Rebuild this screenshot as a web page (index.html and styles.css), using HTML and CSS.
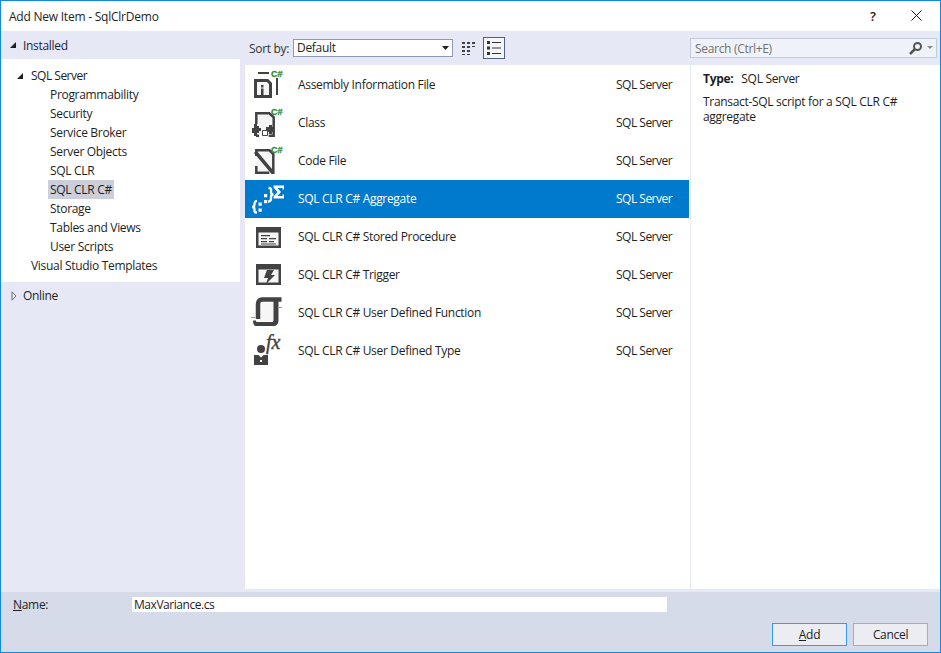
FILE: index.html
```html
<!DOCTYPE html>
<html lang="en">
<head>
<meta charset="utf-8">
<title>Add New Item - SqlClrDemo</title>
<link rel="stylesheet" href="styles.css">
</head>
<body>
<div class="window">
  <header class="titlebar">
    <div class="title">Add New Item - SqlClrDemo</div>
    <div class="help">?</div>
    <svg class="close" width="11" height="11" viewBox="0 0 11 11"><path d="M.5.5l10 10M10.500.5l-10 10" stroke="#1a1a1a" fill="none"/></svg>
  </header>
  <div class="main">
    <aside class="side">
      <div class="side-head"><svg class="arrow" width="8" height="8" viewBox="0 0 8 8"><path d="M7 1v6H1z" fill="#1e1e1e"/></svg><span>Installed</span></div>
      <div class="tree">
        <div class="node lvl1"><svg class="arrow" width="8" height="8" viewBox="0 0 8 8"><path d="M7 1v6H1z" fill="#1e1e1e"/></svg><span class="tight">SQL Server</span></div>
        <div class="node lvl2"><span>Programmability</span></div>
        <div class="node lvl2"><span>Security</span></div>
        <div class="node lvl2"><span>Service Broker</span></div>
        <div class="node lvl2"><span>Server Objects</span></div>
        <div class="node lvl2"><span>SQL CLR</span></div>
        <div class="node lvl2"><span class="current">SQL CLR C#</span></div>
        <div class="node lvl2"><span>Storage</span></div>
        <div class="node lvl2"><span>Tables and Views</span></div>
        <div class="node lvl2"><span>User Scripts</span></div>
        <div class="node lvl1b"><span>Visual Studio Templates</span></div>
      </div>
      <div class="side-online"><svg class="arrow-r" width="6" height="10" viewBox="0 0 6 10"><path d="M1 .8L5 5 1 9.2z" fill="#e6e9f5" stroke="#707070"/></svg><span>Online</span></div>
    </aside>
    <section class="center">
      <div class="toolbar">
        <span class="sort-label">Sort by:</span>
        <div class="select"><span>Default</span><svg width="7" height="4" viewBox="0 0 7 4"><path d="M0 0h7L3.500 4z" fill="#1e1e1e"/></svg></div>
        <svg class="view-grid" width="16" height="16" viewBox="0 0 16 16"><path d="M1 2h3v2H1zM6 2h3v2H6zM11 2h3v2h-3zM1 6h3v2H1zM6 6h3v2H6zM11 6h3v1h-3zM1 10h3v2H1zM6 10h3v2H6zM1 14h3v1H1zM6 14h3v1H6z" fill="#424242"/></svg>
        <div class="view-list"><svg width="16" height="16" viewBox="0 0 16 16"><path d="M1 1h3v3H1zM1 6.500h3v3H1zM1 12h3v3H1zM6 2h9v1H6zM6 7.500h9v1H6zM6 13h9v1H6z" fill="#333"/></svg></div>
      </div>
      <div class="list">
        <div class="row">
          <svg class="ico" width="32" height="32" viewBox="0 0 32 32"><path d="M4.500 11.500h12l3 3v13h-15z" fill="#f6f6f6" stroke="#424242" stroke-width="3"/><path d="M7 3h11v2H7zM25 9h2v17h-2z" fill="#424242"/><path d="M10 16h2.500v2.500H10zM10 19.500h2.500V26H10z" fill="#424242"/><text class="cs" x="20" y="8">C#</text></svg>
          <span class="name">Assembly Information File</span><span class="cat">SQL Server</span>
        </div>
        <div class="row">
          <svg class="ico" width="32" height="32" viewBox="0 0 32 32"><path d="M5 26V7h14l4 3v18H5z" fill="#f6f6f6"/><path d="M5.300 17V6.300h13l4.400 4v18.400h-5M8 28.700H5" fill="none" stroke="#424242" stroke-width="2.500"/><path d="M3 17h3v2h2v2h2v3H8v2H6v3H3v-3H1v-5h2zM15 20h3v-2h3v2h2v5h-2v2h-3v-2h-3z" fill="#424242"/><path d="M11.500 23.500h5v5h-5z" fill="#fff" stroke="#424242"/><text class="cs" x="20" y="8">C#</text></svg>
          <span class="name">Class</span><span class="cat">SQL Server</span>
        </div>
        <div class="row">
          <svg class="ico" width="32" height="32" viewBox="0 0 32 32"><path d="M4.500 6h14l4.500 4v19H4.500z" fill="#f6f6f6"/><path d="M5.300 21v6.700h13M5.300 11V5.300H18.500l3.800 3.700v20" fill="none" stroke="#424242" stroke-width="2.500"/><path d="M3 8l2.500-2.500 18 21.500-2.500 2.500z" fill="#424242"/><text class="cs" x="20" y="8">C#</text></svg>
          <span class="name">Code File</span><span class="cat">SQL Server</span>
        </div>
        <div class="row selected">
          <svg class="ico" width="32" height="32" viewBox="0 0 32 32"><path d="M6 29.500H5c-2 0-1.500-2-1.500-3.500S3 24 1 24c2 0 2.500-.5 2.500-2.500S3.500 18 6 18" fill="none" stroke="#fff" stroke-width="2.300"/><path d="M7.500 19.500h3.200v3.200H7.500zM7.500 25.500h3.200v3.200H7.500zM13 11h3.200v3.200H13zM13 17h3.200v3.200H13z" fill="#fff"/><path d="M17.500 5c3.500 0 2.500 2 2.500 4s1 2.500 2.500 2.500C21 11.500 20 12 20 14s.5 4.500-3 4.500" fill="none" stroke="#fff" stroke-width="2.300"/><path d="M22.500 2.500H33V6.500h-1.500V5H26.500l3.500 4-3.500 4h5v-1.500H33V15.500H22.500v-2L26.500 9l-4-4.500z" fill="#fff"/></svg>
          <span class="name">SQL CLR C# Aggregate</span><span class="cat">SQL Server</span>
        </div>
        <div class="row">
          <svg class="ico" width="32" height="32" viewBox="0 0 32 32"><path d="M5 6h25v21H5z" fill="#424242"/><path d="M7.500 11.500h20V24.500h-20z" fill="#f6f6f6"/><path d="M10 14h9v1.300h-9zM10 17h6v1.300h-6zM10 20h6v1.300h-6zM10 22.500h15v1h-15zM18 17h7v1.300h-7zM18 20h5v1.300h-5z" fill="#424242"/></svg>
          <span class="name">SQL CLR C# Stored Procedure</span><span class="cat">SQL Server</span>
        </div>
        <div class="row">
          <svg class="ico" width="32" height="32" viewBox="0 0 32 32"><path d="M5 5h25v21H5z" fill="#424242"/><path d="M7.500 10.500h20v13h-20z" fill="#f6f6f6"/><path d="M16 11h7l-3 5h4l-9 9 2-6h-4z" fill="#424242"/></svg>
          <span class="name">SQL CLR C# Trigger</span><span class="cat">SQL Server</span>
        </div>
        <div class="row">
          <svg class="ico" width="32" height="32" viewBox="0 0 32 32"><path d="M9 6h15v18H9z" fill="#f6f6f6"/><path d="M7 22V7c0-3 2-4.500 4-4.500h19.500" fill="none" stroke="#424242" stroke-width="4.500"/><path d="M22.500 4h5v19c0 4-2 6-5 6H5c-2 0-3-2-3-5.500h3V24c0 1 1 1 2 1h14c1 0 1.500-1 1.500-2z" fill="#424242"/><path d="M27 10h4v1h-4zM0 20h4v1H0z" fill="#9a9a9a"/></svg>
          <span class="name">SQL CLR C# User Defined Function</span><span class="cat">SQL Server</span>
        </div>
        <div class="row">
          <svg class="ico" width="32" height="32" viewBox="0 0 32 32"><circle cx="10" cy="14" r="4" fill="#424242"/><path d="M3 20h4.500l2.500 2.500 2.500-2.500H17v10H3z" fill="#424242"/><path d="M9 25h2v2H9z" fill="#fff"/><text class="fx" x="15" y="14">fx</text></svg>
          <span class="name">SQL CLR C# User Defined Type</span><span class="cat">SQL Server</span>
        </div>
      </div>
    </section>
    <section class="details">
      <div class="search"><span>Search (Ctrl+E)</span><svg width="26" height="14" viewBox="0 0 26 14"><circle cx="9.500" cy="5.500" r="3.500" fill="none" stroke="#555" stroke-width="2"/><path d="M7 8l-5 5" stroke="#555" stroke-width="2.500"/><path d="M19 5h6l-3 3z" fill="#888"/></svg></div>
      <div class="info">
        <div class="info-type"><b>Type:</b><span>SQL Server</span></div>
        <p class="info-text">Transact-SQL script for a SQL CLR C# aggregate</p>
      </div>
    </section>
  </div>
  <footer class="footer">
    <div class="name-row">
      <label class="name-label"><u>N</u>ame:</label>
      <div class="name-input">MaxVariance.cs</div>
    </div>
    <div class="buttons">
      <div class="btn primary"><u>A</u>dd</div>
      <div class="btn">Cancel</div>
    </div>
  </footer>
</div>
</body>
</html>
```
FILE: styles.css
```css
* { box-sizing: border-box; }
html, body { margin: 0; padding: 0; }
body {
  width: 941px;
  height: 653px;
  overflow: hidden;
  font-family: "Open Sans", "Noto Sans", sans-serif;
  font-size: 12px;
  letter-spacing: -0.31px;
  color: #1e1e1e;
}
.window {
  width: 941px;
  height: 653px;
  border: 1px solid #0f8ae0;
  display: flex;
  flex-direction: column;
  background: #e6e9f5;
}
.titlebar {
  height: 30px;
  flex: none;
  background: #fff;
  display: flex;
  align-items: center;
  padding: 0 18px 0 8px;
}
.title { flex: 1; font-size: 12px; letter-spacing: -0.23px; }
.help { width: 41px; font-size: 13px; font-weight: 600; }
.close { display: block; margin-bottom: 2px; }
.main { flex: 1; display: flex; min-height: 0; }
.side { width: 239px; flex: none; display: flex; flex-direction: column; }
.side-head {
  height: 28px;
  display: flex;
  align-items: center;
  padding-left: 8px;
  color: #1f1f3a;
}
.side-head .arrow { margin-right: 6px; }
.tree { background: #fff; padding: 7px 0; }
.node { height: 19px; display: flex; align-items: center; }
.lvl1 { padding-left: 15px; }
.lvl1 .arrow { margin-right: 7px; }
.lvl1b { padding-left: 30px; }
.lvl2 { padding-left: 47px; }
.lvl2 span { padding: 0 2px; line-height: 19px; }
.tight { letter-spacing: -0.5px; }
.current { background: #ccced9; }
.side-online {
  height: 28px;
  display: flex;
  align-items: center;
  padding-left: 10px;
  padding-bottom: 1px;
}
.arrow-r { margin-right: 6px; }
.center { width: 445px; margin-left: 5px; flex: none; display: flex; flex-direction: column; }
.toolbar { height: 34px; display: flex; align-items: center; padding-left: 4px; }
.sort-label { width: 44px; color: #333; }
.select {
  width: 160px;
  height: 18px;
  background: #fff;
  border: 1px solid #8e9ab5;
  display: flex;
  align-items: center;
  justify-content: space-between;
  padding: 0 3px;
  line-height: 16px;
}
.view-grid { margin-left: 8px; }
.view-list {
  width: 22px;
  height: 22px;
  margin-left: 6px;
  border: 1px solid #4f6180;
  background: #f5f6fa;
  display: flex;
  align-items: center;
  justify-content: center;
}
.list { flex: 1; background: #fff; padding: 1px 1px 0 0; }
.row {
  height: 38px;
  display: flex;
  align-items: center;
  padding-left: 6px;
}
.ico { flex: none; width: 32px; height: 32px; display: block; overflow: visible; }
.name { margin-left: 15px; width: 318px; flex: none; padding-bottom: 2px; }
.cat { flex: none; padding-bottom: 2px; letter-spacing: -0.5px; }
.selected { background: #007acc; color: #fff; }
.cs { font-family: "Liberation Sans", sans-serif; font-size: 9px; font-weight: 700; fill: #388a34; stroke: #388a34; stroke-width: 0.3px; letter-spacing: 0; }
.fx { font-family: "Liberation Serif", serif; font-size: 20px; font-style: italic; font-weight: 400; fill: #424242; stroke: #424242; stroke-width: 0.4px; letter-spacing: 0; }
.details { flex: 1; display: flex; flex-direction: column; min-width: 0; }
.search {
  height: 20px;
  margin: 7px 3px 7px 0;
  background: #f0f2f9;
  border: 1px solid #c4cadb;
  display: flex;
  align-items: center;
  justify-content: space-between;
  padding: 0 2px 0 4px;
  color: #717171;
}
.info {
  flex: 1;
  background: #fff;
  border-left: 1px solid #e6e9f5;
  padding: 6px 12px;
}
.info-type { line-height: 16px; }
.info-type b { font-weight: 700; margin-right: 8px; }
.info-text { margin: 7px 0 0; line-height: 15px; width: 210px; }
.footer {
  flex: none;
  height: 60px;
  margin-top: 3px;
  background: #d6dbe9;
  display: flex;
  flex-direction: column;
}
.name-row { display: flex; align-items: center; padding: 5px 0 0 12px; height: 20px; }
.name-label { width: 119px; }
.name-input {
  width: 535px;
  height: 15px;
  background: #fff;
  padding-left: 2px;
  line-height: 15px;
  letter-spacing: -0.45px;
}
.buttons {
  display: flex;
  justify-content: flex-end;
  gap: 6px;
  margin-top: 11px;
  padding-right: 12px;
}
.btn {
  width: 75px;
  height: 23px;
  background: #ecedf2;
  border: 1px solid #aaacb2;
  display: flex;
  align-items: center;
  justify-content: center;
  white-space: pre;
}
.primary { border-color: #3399ff; }
```
